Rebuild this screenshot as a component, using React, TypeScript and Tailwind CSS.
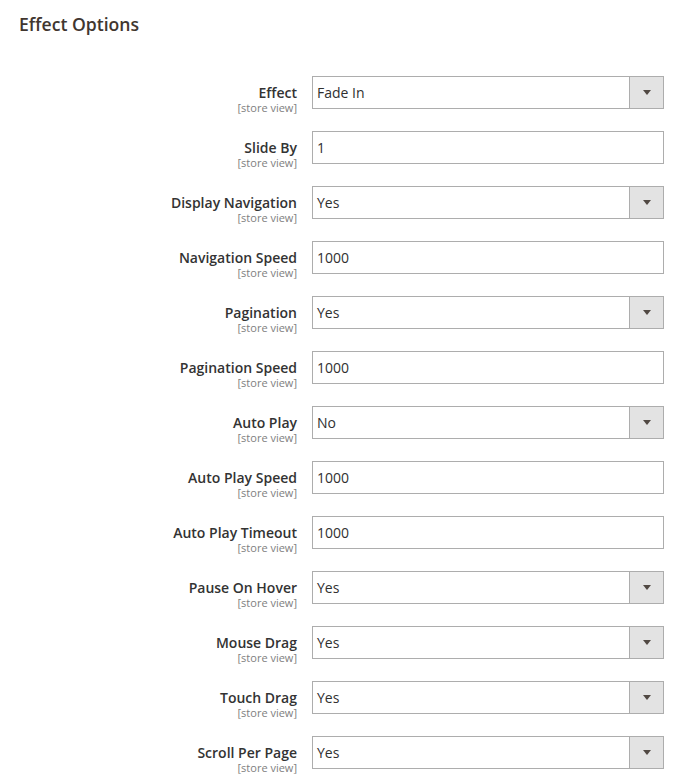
const fields: { label: string; value: string; select: boolean }[] = [
  { label: 'Effect', value: 'Fade In', select: true },
  { label: 'Slide By', value: '1', select: false },
  { label: 'Display Navigation', value: 'Yes', select: true },
  { label: 'Navigation Speed', value: '1000', select: false },
  { label: 'Pagination', value: 'Yes', select: true },
  { label: 'Pagination Speed', value: '1000', select: false },
  { label: 'Auto Play', value: 'No', select: true },
  { label: 'Auto Play Speed', value: '1000', select: false },
  { label: 'Auto Play Timeout', value: '1000', select: false },
  { label: 'Pause On Hover', value: 'Yes', select: true },
  { label: 'Mouse Drag', value: 'Yes', select: true },
  { label: 'Touch Drag', value: 'Yes', select: true },
  { label: 'Scroll Per Page', value: 'Yes', select: true },
];

const App = () => {
  return (
    <div className="min-h-screen bg-white font-['Open_Sans',sans-serif] text-[#303030]">
      {/* Section title */}
      <h2 className="pl-[19px] pt-[12px] text-[17.6px] font-semibold leading-6 text-[#41362f]">
        Effect Options
      </h2>

      <div className="mt-[40px] flex flex-col gap-[22px]">
        {fields.map((f) => (
          <div key={f.label} className="flex h-[33px] items-start">
            <div className="w-[297px] pt-[9px] text-right">
              <div className="text-[14px] font-semibold leading-[16px] text-[#333]">{f.label}</div>
              <div className="mt-[1px] text-[11px] leading-[12px] text-[#808080]">[store view]</div>
            </div>
            <div className="ml-[15px] flex h-[33px] w-[352px] border border-[#adadad] bg-white">
              <div className="flex flex-1 items-center pl-[4px] text-[14px] leading-none">
                {f.value}
              </div>
              {f.select && (
                <div className="flex w-[34px] items-center justify-center border-l border-[#adadad] bg-[#e3e3e3]">
                  <svg width="8" height="5" viewBox="0 0 8 5">
                    <path d="M0 0h8L4 5z" fill="#514943" />
                  </svg>
                </div>
              )}
            </div>
          </div>
        ))}
      </div>
    </div>
  );
};

export default App;
